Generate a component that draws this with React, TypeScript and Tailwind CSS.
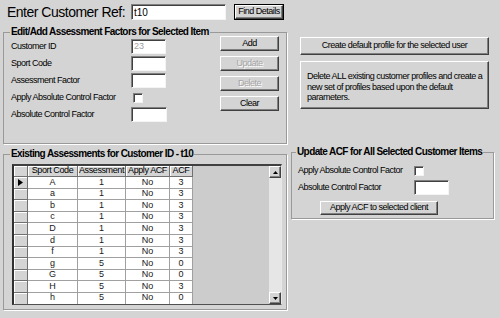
import React from 'react';

const rows: [string, string, string, string][] = [
  ['A', '1', 'No', '3'],
  ['a', '1', 'No', '3'],
  ['b', '1', 'No', '3'],
  ['c', '1', 'No', '3'],
  ['D', '1', 'No', '3'],
  ['d', '1', 'No', '3'],
  ['f', '1', 'No', '3'],
  ['g', '5', 'No', '0'],
  ['G', '5', 'No', '0'],
  ['H', '5', 'No', '3'],
  ['h', '5', 'No', '0'],
];

const Btn: React.FC<{ children: React.ReactNode; disabled?: boolean; className?: string }> = ({
  children,
  disabled,
  className = '',
}) => (
  <div
    className={`flex items-center justify-center bg-[#d4d4d4] border border-t-white border-l-white border-b-[#404040] border-r-[#404040] shadow-[inset_-1px_-1px_0_#808080] text-[9px] tracking-[-0.5px] whitespace-nowrap ${
      disabled ? 'text-[#a4a4a4] [text-shadow:1px_1px_0_#fff]' : 'text-black'
    } ${className}`}
  >
    {children}
  </div>
);

const Field: React.FC<{ value?: string; grey?: boolean; className?: string }> = ({ value, grey, className = '' }) => (
  <div
    className={`h-[15px] bg-white border border-t-[#808080] border-l-[#808080] border-b-[#f4f4f4] border-r-[#f4f4f4] shadow-[inset_1px_1px_0_#404040] flex items-center pl-[2px] text-[9px] ${
      grey ? 'text-[#a0a0a0]' : 'text-black'
    } ${className}`}
  >
    {value}
  </div>
);

const Check: React.FC<{ className?: string }> = ({ className = '' }) => (
  <div
    className={`w-[10px] h-[10px] bg-white border border-t-[#808080] border-l-[#808080] border-b-[#f4f4f4] border-r-[#f4f4f4] shadow-[inset_1px_1px_0_#404040] ${className}`}
  />
);

const Row: React.FC<{ label: string; labelW: string; children: React.ReactNode }> = ({ label, labelW, children }) => (
  <div className="flex items-center h-[17px]">
    <span className={`${labelW} text-[9px] tracking-[-0.5px] whitespace-nowrap text-black`}>{label}</span>
    {children}
  </div>
);

const HeadCell: React.FC<{ w: string; children?: React.ReactNode }> = ({ w, children }) => (
  <div
    className={`${w} h-full flex items-center justify-center bg-[#d4d4d4] border-r border-b border-[#707070] shadow-[inset_1px_1px_0_#fff] text-[9px] tracking-[-0.4px] text-black whitespace-nowrap`}
  >
    {children}
  </div>
);

const Cell: React.FC<{ w: string; children: React.ReactNode }> = ({ w, children }) => (
  <div
    className={`${w} h-full flex items-center justify-center bg-white border-r border-b border-[#a0a0a0] text-[9px] text-[#202020]`}
  >
    {children}
  </div>
);

export default function App() {
  return (
    <div className="w-[500px] h-[318px] bg-[#d4d4d4] overflow-hidden font-['Liberation_Sans',Arial,sans-serif] text-black">
      {/* top bar */}
      <div className="flex items-center h-[16px] mt-[4px] pl-[7px]">
        <span className="w-[124px] text-[14px] tracking-[-0.5px] leading-none whitespace-nowrap">Enter Customer Ref:</span>
        <Field value="t10" className="w-[95px] h-[16px] text-[10px]" />
        <div className="ml-[8px] w-[50px] h-[16px] border border-black">
          <Btn className="w-full h-full">Find Details</Btn>
        </div>
      </div>

      <div className="flex mt-[6px]">
        {/* left column */}
        <div className="ml-[3px] w-[284px] flex flex-col">
          <fieldset className="h-[118px] border border-[#999999] shadow-[1px_1px_0_#fff]">
            <legend className="ml-[6px] px-[1px] text-[10px] font-bold leading-[12px] tracking-[-0.6px]">
              Edit/Add Assessment Factors for Selected Item
            </legend>
            <div className="flex">
              <div className="pl-[7px] flex flex-col">
                <Row label="Customer ID" labelW="w-[120px]">
                  <Field value="23" grey className="w-[35px]" />
                </Row>
                <Row label="Sport Code" labelW="w-[120px]">
                  <Field className="w-[35px]" />
                </Row>
                <Row label="Assessment Factor" labelW="w-[120px]">
                  <Field className="w-[35px]" />
                </Row>
                <Row label="Apply Absolute Control Factor" labelW="w-[120px]">
                  <Check className="ml-[2px]" />
                </Row>
                <Row label="Absolute Control Factor" labelW="w-[120px]">
                  <Field className="w-[36px]" />
                </Row>
              </div>
              <div className="ml-auto mr-[7px] -mt-[2px] w-[59px] flex flex-col gap-[5px]">
                <Btn className="h-[15px]">Add</Btn>
                <Btn className="h-[15px]" disabled>Update</Btn>
                <Btn className="h-[15px]" disabled>Delete</Btn>
                <Btn className="h-[15px]">Clear</Btn>
              </div>
            </div>
          </fieldset>

          <fieldset className="mt-[4px] h-[162px] border border-[#999999] shadow-[1px_1px_0_#fff]">
            <legend className="ml-[6px] px-[1px] text-[10px] font-bold leading-[12px] tracking-[-0.6px]">
              Existing Assessments for Customer ID - t10
            </legend>
            <div className="ml-[8px] mt-[4px] w-[270px] h-[141px] flex border-t-2 border-l-2 border-b border-r border-t-[#404040] border-l-[#303030] border-b-[#505050] border-r-[#e8e8e8] overflow-hidden">
              <div className="flex-1 bg-[#cccccc] flex flex-col">
                <div className="flex h-[11px] shrink-0">
                  <HeadCell w="w-[14px]" />
                  <HeadCell w="w-[50px]">Sport Code</HeadCell>
                  <HeadCell w="w-[48px]">Assessment</HeadCell>
                  <HeadCell w="w-[44px]">Apply ACF</HeadCell>
                  <HeadCell w="w-[23px]">ACF</HeadCell>
                </div>
                {rows.map((r, i) => (
                  <div key={i} className="flex h-[11.6px] shrink-0">
                    <HeadCell w="w-[14px]">
                      {i === 0 && (
                        <svg width="5" height="7" viewBox="0 0 5 7">
                          <path d="M0 0 L5 3.5 L0 7 Z" fill="#000" />
                        </svg>
                      )}
                    </HeadCell>
                    <Cell w="w-[50px]">{r[0]}</Cell>
                    <Cell w="w-[48px]">{r[1]}</Cell>
                    <Cell w="w-[44px]">{r[2]}</Cell>
                    <Cell w="w-[23px]">{r[3]}</Cell>
                  </div>
                ))}
              </div>
              {/* scrollbar */}
              <div className="w-[12px] flex flex-col bg-[#e6e6e6]">
                <Btn className="h-[12px] shrink-0">
                  <svg width="5" height="3" viewBox="0 0 5 3">
                    <path d="M2.5 0 L5 3 L0 3 Z" fill="#000" />
                  </svg>
                </Btn>
                <div className="flex-1" />
                <Btn className="h-[12px] shrink-0">
                  <svg width="5" height="3" viewBox="0 0 5 3">
                    <path d="M0 0 L5 0 L2.5 3 Z" fill="#000" />
                  </svg>
                </Btn>
              </div>
            </div>
          </fieldset>
        </div>

        {/* right column */}
        <div className="ml-[4px] flex flex-col">
          <Btn className="ml-[9px] mt-[11px] w-[189px] h-[18px]">Create default profile for the selected user</Btn>
          <Btn className="ml-[9px] mt-[6px] w-[189px] h-[48px] !items-start !justify-start pt-[9px] pl-[6px] leading-[10.5px] text-left">
            <span>
              Delete ALL existing customer profiles and create a
              <br />
              new set of profiles based upon the default
              <br />
              parameters.
            </span>
          </Btn>

          <fieldset className="mt-[37px] w-[203px] h-[73px] border border-[#999999] shadow-[1px_1px_0_#fff]">
            <legend className="ml-[4px] px-[1px] text-[10px] font-bold leading-[12px] tracking-[-0.6px]">
              Update ACF for All Selected Customer Items
            </legend>
            <div className="pt-[4px] pl-[6px] flex flex-col">
              <Row label="Apply Absolute Control Factor" labelW="w-[116px]">
                <Check />
              </Row>
              <Row label="Absolute Control Factor" labelW="w-[116px]">
                <Field className="w-[35px]" />
              </Row>
              <Btn className="ml-[22px] mt-[5px] w-[118px] h-[14px]">Apply ACF to selected client</Btn>
            </div>
          </fieldset>
        </div>
      </div>
    </div>
  );
}
